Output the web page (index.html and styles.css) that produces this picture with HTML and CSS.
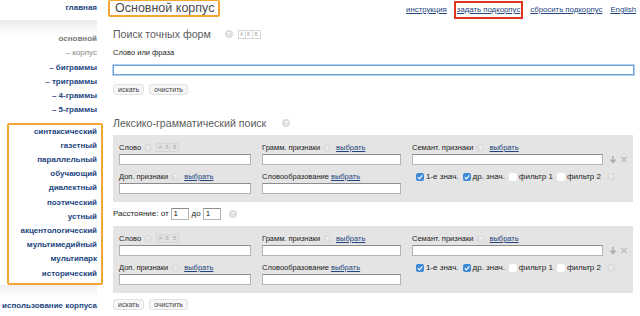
FILE: index.html
```html
<!DOCTYPE html>
<html lang="ru">

<head>
    <meta charset="UTF-8">
    <meta name="viewport" content="width=device-width, initial-scale=1.0">
    <title>Основной корпус</title>
    <link rel="stylesheet" href="styles.css">
</head>

<body>
<div class="page">
    <aside class="sidebar">
        <div class="sideHome"><a href="#" class="sideLink">главная</a></div>
        <ul class="sideList sideCorpus">
            <li class="sideCurrent">основной</li>
            <li class="sideSub">– корпус</li>
            <li><a href="#" class="sideLink">– биграммы</a></li>
            <li><a href="#" class="sideLink">– триграммы</a></li>
            <li><a href="#" class="sideLink">– 4-граммы</a></li>
            <li><a href="#" class="sideLink">– 5-граммы</a></li>
        </ul>
        <ul class="sideList sideBox">
            <li><a href="#" class="sideLink">синтаксический</a></li>
            <li><a href="#" class="sideLink">газетный</a></li>
            <li><a href="#" class="sideLink">параллельный</a></li>
            <li><a href="#" class="sideLink">обучающий</a></li>
            <li><a href="#" class="sideLink">диалектный</a></li>
            <li><a href="#" class="sideLink">поэтический</a></li>
            <li><a href="#" class="sideLink">устный</a></li>
            <li><a href="#" class="sideLink">акцентологический</a></li>
            <li><a href="#" class="sideLink">мультимедийный</a></li>
            <li><a href="#" class="sideLink">мультипарк</a></li>
            <li><a href="#" class="sideLink">исторический</a></li>
        </ul>
        <div class="sideUsage"><a href="#" class="sideLink">использование корпуса</a></div>
    </aside>

    <main class="content">
        <header class="topBar">
            <h1 class="pageTitle">Основной корпус</h1>
            <nav class="topLinks">
                <a href="#">инструкция</a>
                <a href="#" class="topLinkActive">задать подкорпус</a>
                <a href="#">сбросить подкорпус</a>
                <a href="#">English</a>
            </nav>
        </header>

        <!-- Exact forms -->
        <section class="searchSection">
            <h2 class="sectionTitle">Поиск точных форм <span class="helpIcon">?</span> <span class="abcIcon"><span>А</span><span>Б</span><span>В</span></span></h2>
            <div class="fieldLabel">Слово или фраза</div>
            <input type="text" class="textInput wideInput">
            <div class="buttons">
                <button class="btn">искать</button>
                <button class="btn">очистить</button>
            </div>
        </section>

        <!-- Lexical-grammatical -->
        <section class="searchSection lexSection">
            <h2 class="sectionTitle">Лексико-грамматический поиск <span class="helpIcon helpWide">?</span></h2>

            <div class="termPanel">
                <div class="field">
                    <div class="fieldLabel">Слово <span class="helpIcon">?</span> <span class="abcIcon"><span>А</span><span>Б</span><span>В</span></span></div>
                    <input type="text" class="textInput">
                </div>
                <div class="field">
                    <div class="fieldLabel">Грамм. признаки <span class="helpIcon">?</span> <a href="#" class="chooseLink">выбрать</a></div>
                    <input type="text" class="textInput">
                </div>
                <div class="field">
                    <div class="fieldLabel">Семант. признаки <span class="helpIcon">?</span> <a href="#" class="chooseLink">выбрать</a></div>
                    <div class="inputRow">
                        <input type="text" class="textInput semInput">
                        <span class="rowIcons">
                            <svg width="8" height="9" viewBox="0 0 8 9"><path d="M4 1v6M1.5 4.5L4 7.5 6.5 4.5" fill="none" stroke="#aaa" stroke-width="1.4"/></svg>
                            <svg width="8" height="9" viewBox="0 0 8 9"><path d="M1.5 2l5 5M6.5 2l-5 5" fill="none" stroke="#bbb" stroke-width="1.2"/></svg>
                        </span>
                    </div>
                </div>
                <div class="field">
                    <div class="fieldLabel">Доп. признаки <span class="helpIcon">?</span> <a href="#" class="chooseLink">выбрать</a></div>
                    <input type="text" class="textInput">
                </div>
                <div class="field">
                    <div class="fieldLabel">Словообразование <a href="#" class="chooseLink">выбрать</a></div>
                    <input type="text" class="textInput">
                </div>
                <div class="checkRow">
                    <span class="check checked"></span>1-е знач.
                    <span class="check checked"></span>др. знач.
                    <span class="check"></span>фильтр 1
                    <span class="check"></span>фильтр 2
                    <span class="helpIcon">?</span>
                </div>
            </div>

            <div class="distanceRow">
                Расстояние: от <input type="text" class="textInput distInput" value="1">
                до <input type="text" class="textInput distInput" value="1">
                <span class="helpIcon">?</span>
            </div>

            <div class="termPanel">
                <div class="field">
                    <div class="fieldLabel">Слово <span class="helpIcon">?</span> <span class="abcIcon"><span>А</span><span>Б</span><span>В</span></span></div>
                    <input type="text" class="textInput">
                </div>
                <div class="field">
                    <div class="fieldLabel">Грамм. признаки <span class="helpIcon">?</span> <a href="#" class="chooseLink">выбрать</a></div>
                    <input type="text" class="textInput">
                </div>
                <div class="field">
                    <div class="fieldLabel">Семант. признаки <span class="helpIcon">?</span> <a href="#" class="chooseLink">выбрать</a></div>
                    <div class="inputRow">
                        <input type="text" class="textInput semInput">
                        <span class="rowIcons">
                            <svg width="8" height="9" viewBox="0 0 8 9"><path d="M4 1v6M1.5 4.5L4 7.5 6.5 4.5" fill="none" stroke="#aaa" stroke-width="1.4"/></svg>
                            <svg width="8" height="9" viewBox="0 0 8 9"><path d="M1.5 2l5 5M6.5 2l-5 5" fill="none" stroke="#bbb" stroke-width="1.2"/></svg>
                        </span>
                    </div>
                </div>
                <div class="field">
                    <div class="fieldLabel">Доп. признаки <span class="helpIcon">?</span> <a href="#" class="chooseLink">выбрать</a></div>
                    <input type="text" class="textInput">
                </div>
                <div class="field">
                    <div class="fieldLabel">Словообразование <a href="#" class="chooseLink">выбрать</a></div>
                    <input type="text" class="textInput">
                </div>
                <div class="checkRow">
                    <span class="check checked"></span>1-е знач.
                    <span class="check checked"></span>др. знач.
                    <span class="check"></span>фильтр 1
                    <span class="check"></span>фильтр 2
                    <span class="helpIcon">?</span>
                </div>
            </div>

            <div class="buttons bottomButtons">
                <button class="btn">искать</button>
                <button class="btn">очистить</button>
            </div>
        </section>
    </main>
</div>
</body>

</html>
```

FILE: styles.css
```css
* {
    box-sizing: border-box;
    margin: 0;
    padding: 0;
    font-family: 'Liberation Sans', Arial, sans-serif;
}

body {
    background-color: #fff;
    color: #222;
    overflow: hidden;
}

a {
    color: #23467f;
}

.page {
    display: flex;
    flex-flow: row nowrap;
    width: 640px;
    height: 316px;
}

/* SIDEBAR */
.sidebar {
    width: 104px;
    flex-shrink: 0;
    text-align: right;
    font-size: 8px;
    font-weight: bold;
}

.sideLink {
    color: #23467f;
    text-decoration: none;
}

.sideHome {
    height: 20px;
    padding: 1px 7px 0 0;
    line-height: 14px;
}

.sideList {
    list-style: none;
}

.sideCorpus {
    margin-right: 7px;
    padding-top: 12px;
    line-height: 14.3px;
    background: linear-gradient(to bottom, #ebebeb 0, #fff 15px);
}

.sideCurrent {
    color: #777;
}

.sideSub {
    color: #888;
    font-weight: normal;
}

.sideBox {
    margin: 5px 1px 0 7px;
    padding: 0 4px 2px 0;
    border: 2px solid #f2a634;
    border-radius: 2px;
    line-height: 14.17px;
}

.sideUsage {
    margin-right: 7px;
    padding-top: 14px;
    line-height: 14px;
    background: linear-gradient(to bottom, #efefef 0, #fff 12px);
}

/* MAIN */
.content {
    flex: 1;
    padding-left: 4px;
}

.topBar {
    display: flex;
    justify-content: space-between;
    align-items: flex-start;
    height: 19px;
    padding-right: 3px;
}

.pageTitle {
    font-size: 12.5px;
    font-weight: normal;
    line-height: 14px;
    color: #4a4a4a;
    padding: 0 4px 0 5px;
    border: 2px solid #f2a634;
    border-top-width: 1px;
    border-radius: 2px;
}

.topLinks {
    display: flex;
    align-items: center;
    gap: 6px;
    font-size: 7.8px;
    line-height: 10px;
    padding-top: 1px;
}

.topLinks a {
    padding: 2px 1px;
}

.topLinkActive {
    border: 2px solid #e0361f;
}

.searchSection {
    padding: 0 6px 0 5px;
}

.sectionTitle {
    margin-top: 8px;
    font-size: 10.6px;
    font-weight: normal;
    line-height: 14px;
    color: #5c5c5c;
    display: flex;
    align-items: center;
}

.sectionTitle .helpIcon {
    margin-left: 14px;
}

.sectionTitle .helpWide {
    margin-left: 16px;
}

.sectionTitle .abcIcon {
    margin-left: 2px;
}

.lexSection .sectionTitle {
    margin-top: 21px;
}

.fieldLabel {
    font-size: 7.5px;
    line-height: 12px;
    color: #222;
    display: flex;
    align-items: center;
    white-space: nowrap;
}

.searchSection > .fieldLabel {
    margin-top: 6px;
}

.helpIcon {
    display: inline-flex;
    align-items: center;
    justify-content: center;
    width: 8px;
    height: 8px;
    margin: 0 3px;
    border-radius: 50%;
    background-color: #dcdcdc;
    color: #fff;
    font-size: 6px;
    font-weight: bold;
    line-height: 8px;
}

.abcIcon {
    display: inline-flex;
    height: 9px;
    border: 1px solid #d6d6d6;
    margin-left: 1px;
}

.abcIcon span {
    width: 7px;
    font-size: 5px;
    line-height: 7px;
    text-align: center;
    color: #aaa;
    border-right: 1px solid #ddd;
}

.abcIcon span:last-child {
    border-right: none;
}

.chooseLink {
    margin-left: 2px;
}

.textInput {
    display: block;
    width: 100%;
    height: 11px;
    padding: 0 2px;
    border: 1px solid #b4b4b4;
    border-top-color: #8c8c8c;
    background-color: #fff;
    font-size: 8px;
    outline: none;
}

.wideInput {
    margin-top: 6px;
    height: 10px;
    border: 1px solid #6fa0d8;
    box-shadow: 0 0 0 1px #b3d0f0;
}

.buttons {
    display: flex;
    gap: 5px;
    margin-top: 9px;
}

.btn {
    height: 11px;
    padding: 0 4px;
    font-size: 7px;
    color: #444;
    background-color: #f6f6f6;
    border: 1px solid #e2e2e2;
    border-radius: 3px;
}

.bottomButtons {
    margin-top: 6px;
}

/* TERM PANEL */
.termPanel {
    display: grid;
    grid-template-columns: 132px 139px auto;
    column-gap: 11px;
    row-gap: 5px;
    margin: 5px 1px 0 0;
    padding: 6px 0 8px 6px;
    background-color: #e4e4e4;
}

.termPanel .fieldLabel {
    line-height: 13px;
}

.inputRow {
    display: flex;
    align-items: center;
}

.semInput {
    width: 191px;
    flex-shrink: 0;
}

.rowIcons {
    display: flex;
    gap: 3px;
    margin-left: 6px;
}

.checkRow {
    display: flex;
    align-items: center;
    height: 13px;
    font-size: 8px;
    color: #222;
    white-space: nowrap;
}

.check {
    display: inline-block;
    width: 8px;
    height: 8px;
    margin: 0 2px 0 4px;
    border-radius: 2px;
    background-color: #fff;
}

.check:first-child {
    margin-left: 4px;
}

.check.checked {
    background: #3d8ad6 url("data:image/svg+xml,%3Csvg xmlns='http://www.w3.org/2000/svg' viewBox='0 0 8 8'%3E%3Cpath d='M1.8 4.2l1.6 1.6 3-3.4' fill='none' stroke='%23fff' stroke-width='1.2'/%3E%3C/svg%3E") center / 8px 8px no-repeat;
}

.checkRow .helpIcon {
    margin-left: 6px;
}

.distanceRow {
    display: flex;
    align-items: center;
    height: 19px;
    padding-top: 4px;
    font-size: 8px;
    color: #222;
    white-space: nowrap;
}

.distInput {
    width: 18px;
    height: 12px;
    margin: 0 3px 0 2px;
    font-size: 8px;
    color: #222;
}

.distanceRow .helpIcon {
    margin-left: 5px;
}
```
